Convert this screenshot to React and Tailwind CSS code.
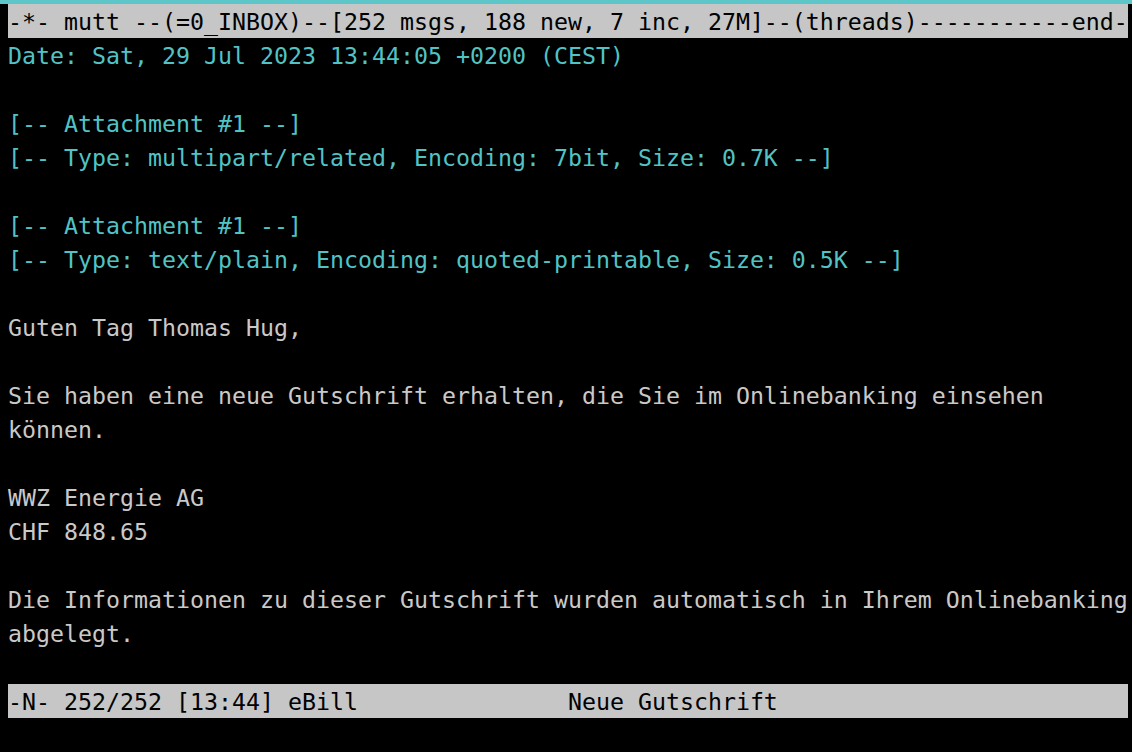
import React from "react";

const rows = [
  { text: "Date: Sat, 29 Jul 2023 13:44:05 +0200 (CEST)", tone: "cyan" },
  { text: "" },
  { text: "[-- Attachment #1 --]", tone: "cyan" },
  { text: "[-- Type: multipart/related, Encoding: 7bit, Size: 0.7K --]", tone: "cyan" },
  { text: "" },
  { text: "[-- Attachment #1 --]", tone: "cyan" },
  { text: "[-- Type: text/plain, Encoding: quoted-printable, Size: 0.5K --]", tone: "cyan" },
  { text: "" },
  { text: "Guten Tag Thomas Hug," },
  { text: "" },
  { text: "Sie haben eine neue Gutschrift erhalten, die Sie im Onlinebanking einsehen" },
  { text: "können." },
  { text: "" },
  { text: "WWZ Energie AG" },
  { text: "CHF 848.65" },
  { text: "" },
  { text: "Die Informationen zu dieser Gutschrift wurden automatisch in Ihrem Onlinebanking" },
  { text: "abgelegt." },
  { text: "" },
];

function Line({ text, tone }) {
  return (
    <div
      className={
        "h-[34px] leading-[36px] whitespace-pre " +
        (tone === "cyan" ? "text-[#52c3c5]" : "text-[#c9c9c9]")
      }
    >
      {text || " "}
    </div>
  );
}

export default function App() {
  return (
    <main
      className="h-[752px] w-[1132px] overflow-hidden bg-black text-[23.25px]"
      style={{ fontFamily: '"DejaVu Sans Mono", "Liberation Mono", monospace' }}
    >
      <div className="h-[4px] bg-[#5cc6c8]" />
      <div className="pl-2">
        <div className="h-[34px] w-[1120px] bg-[#c6c6c6] leading-[36px] text-black whitespace-pre">
          -*- mutt --(=0_INBOX)--[252 msgs, 188 new, 7 inc, 27M]--(threads)-----------end-
        </div>
        {rows.map((r, i) => (
          <Line key={i} text={r.text} tone={r.tone} />
        ))}
        <div className="h-[34px] w-[1120px] bg-[#c6c6c6] leading-[36px] text-black whitespace-pre">
          {"-N- 252/252 [13:44] eBill               Neue Gutschrift"}
        </div>
      </div>
    </main>
  );
}
